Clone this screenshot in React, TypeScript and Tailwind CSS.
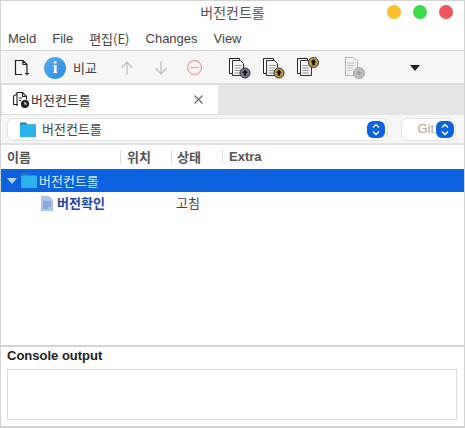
import React from "react";

const KR = { fontFamily: '"Noto Sans CJK KR", "Noto Sans", sans-serif' };
const LAT = { fontFamily: '"Liberation Sans", sans-serif' };

function DocStack({ color, top }: { color: string; top?: boolean }) {
  const cy = top ? 6.5 : 17;
  const cx = top ? 17.5 : 17;
  return (
    <svg width="23" height="23" viewBox="0 0 23 23">
      <path d="M1.500 2.500h10v15h-10z" fill="#fff" stroke="#222" />
      <path d="M4.500 4.500h8l3 3v12h-11z" fill="#f2f2f2" stroke="#333" />
      <path d="M6.500 9.500h7M6.500 12h7M6.500 14.500h6M6.500 17h6" stroke="#999" />
      <circle cx={cx} cy={cy} r="5" fill={color} stroke="#333" />
      <path d={`M${cx} ${cy - 3.5}l2.800 3.200h-1.500v3h-2.600v-3h-1.500z`} fill="#111" />
    </svg>
  );
}

function Updown() {
  return (
    <span className="flex h-[17px] w-[18px] items-center justify-center rounded-[6px] bg-[#0d62e0]">
      <svg width="10" height="13" viewBox="0 0 10 13" fill="none" stroke="#fff" strokeWidth="1.400">
        <path d="M2 4.500l3-3 3 3M2 8.500l3 3 3-3" />
      </svg>
    </span>
  );
}

function Folder({ w = 16, h = 15 }: { w?: number; h?: number }) {
  return (
    <svg width={w} height={h} viewBox="0 0 16 15">
      <path d="M0 1.500a1 1 0 011-1h5l1.500 2H16V14a1 1 0 01-1 1H1a1 1 0 01-1-1z" fill="#1f7fa8" />
      <path d="M1 2.500H15a1 1 0 011 1V14a1 1 0 01-1 1H1a1 1 0 01-1-1V3.500z" fill="#2bb2ec" />
    </svg>
  );
}

export default function App() {
  return (
    <div className="flex h-[428px] w-[465px] flex-col overflow-hidden border border-b-[2px] border-[#d4d4d4] bg-white text-[#333]" style={KR}>
      <div className="relative flex h-[26px] shrink-0 items-center justify-center pb-[3px]">
        <span className="text-[14px] text-[#555]">버전컨트롤</span>
        <div className="absolute right-[11px] top-[4px] flex gap-[12px]">
          <span className="h-[14px] w-[14px] rounded-full bg-[#fdbf2d]" />
          <span className="h-[14px] w-[14px] rounded-full bg-[#3bdc4a]" />
          <span className="h-[14px] w-[14px] rounded-full bg-[#f2545b]" />
        </div>
      </div>

      <div className="flex h-[24px] shrink-0 items-center gap-[16px] border-b border-[#d4d4d4] pl-[7px] pt-[1px] text-[13px] text-[#444]">
        <span style={LAT}>Meld</span>
        <span style={LAT}>File</span>
        <span>편집(E)</span>
        <span style={LAT}>Changes</span>
        <span style={LAT}>View</span>
      </div>

      <div className="flex h-[34px] shrink-0 items-center border-b-2 border-[#dcdcdc] bg-[#f6f6f6] pl-[12px] pt-[1px]">
        <svg className="shrink-0" width="18" height="18" viewBox="0 0 18 18" fill="none" stroke="#222" strokeWidth="1.200">
          <path d="M9 15.500H2.500V1.500h7.500l4 4v7M10 1.500v4h4M14 12.500v4M12 14.500h4" />
        </svg>
        <span className="ml-[13px] flex h-[22px] w-[22px] shrink-0 items-center justify-center rounded-full bg-gradient-to-br from-[#56b0ee] to-[#2a86e2] text-[17px] font-bold leading-none text-white" style={{ fontFamily: '"Liberation Serif", serif' }}>i</span>
        <span className="ml-[7px] w-[24px] shrink-0 text-[13px] text-[#444]">비교</span>
        <svg className="ml-[22px] shrink-0" width="16" height="16" viewBox="0 0 16 16" fill="none" stroke="#bbb" strokeWidth="1.200"><path d="M8 14.500V2M2.800 7.500L8 2l5.200 5.500" /></svg>
        <svg className="ml-[18px] shrink-0" width="16" height="16" viewBox="0 0 16 16" fill="none" stroke="#bbb" strokeWidth="1.200"><path d="M8 1.500V14M2.800 8.500L8 14l5.200-5.500" /></svg>
        <svg className="ml-[17px] shrink-0" width="17" height="17" viewBox="0 0 17 17" fill="none" stroke="#e9a9a6" strokeWidth="1.300"><circle cx="8.500" cy="8.500" r="7" /><path d="M4.500 8.500h8" /></svg>
        <span className="ml-[25px] flex shrink-0 gap-[11px]">
          <DocStack color="#7f7494" />
          <DocStack color="#c69a3e" />
          <DocStack color="#c69a3e" top />
        </span>
        <span className="ml-[24px] shrink-0 opacity-45"><svg width="23" height="23" viewBox="0 0 23 23">
          <path d="M2.500 1.500h8l4 4v14h-12z" fill="#eee" stroke="#666" />
          <path d="M4.500 7h7M4.500 9.500h7M4.500 12h6M4.500 14.500h4" stroke="#888" />
          <circle cx="16" cy="17" r="5.500" fill="#7f7494" stroke="#444" />
          <path d="M13.500 17h5M16 14.500v5" stroke="#222" />
        </svg></span>
        <svg className="ml-[44px] shrink-0" width="10" height="6" viewBox="0 0 10 6"><path d="M0 0h10L5 6z" fill="#222" /></svg>
      </div>

      <div className="flex h-[30px] shrink-0 bg-[#e4e4e4] pl-[1px]">
        <div className="flex w-[216px] items-center border-b border-[#dcdcdc] bg-white pl-[11px] pr-[15px]">
          <svg className="shrink-0" width="16" height="17" viewBox="0 0 16 17" fill="none" stroke="#222" strokeWidth="1.100">
            <path d="M5 13.500H.5V5l3.500-2" />
            <path d="M4 15V1.500h5.500l4 4v3" />
            <path d="M9.500 1.500v4h4M6 7h3M6 9.500h2" />
            <circle cx="12" cy="13" r="3.500" fill="#222" />
            <path d="M12 11v2h2" stroke="#fff" />
          </svg>
          <span className="ml-[2px] flex-1 text-[13px] text-[#333]">버전컨트롤</span>
          <svg width="9" height="9" viewBox="0 0 9 9" stroke="#666" strokeWidth="1.100"><path d="M.5.500l8 8M8.500.500l-8 8" /></svg>
        </div>
      </div>

      <div className="flex h-[30px] shrink-0 items-center gap-[13px] border-b-2 border-[#e2e2e2] bg-[#f6f6f6] pl-[6px] pr-[8px]">
        <div className="flex h-[23px] flex-1 items-center rounded-[7px] border border-[#e2e2e2] bg-white pl-[12px] pr-[2px]">
          <Folder />
          <span className="ml-[6px] flex-1 text-[13px] text-[#444]">버전컨트롤</span>
          <Updown />
        </div>
        <div className="flex h-[23px] w-[55px] items-center justify-end gap-[2px] rounded-[7px] border border-[#e2e2e2] bg-white pr-[1px]">
          <span className="text-[13px] text-[#aaa]" style={LAT}>Git</span>
          <Updown />
        </div>
      </div>

      <div className="flex h-[24px] shrink-0 items-center pb-[1px] text-[13px] font-bold text-[#555]">
        <span className="h-[14px] w-[120px] border-r border-[#ddd] pl-[6px] leading-[14px]">이름</span>
        <span className="h-[14px] w-[51px] border-r border-[#ddd] pl-[6px] leading-[14px]">위치</span>
        <span className="h-[14px] w-[51px] border-r border-[#ddd] pl-[5px] leading-[14px]">상태</span>
        <span className="pl-[6px] leading-[14px]" style={LAT}>Extra</span>
      </div>

      <div className="flex h-[23px] shrink-0 items-center bg-[#0d62e0] pl-[6px] text-[13px] text-[#dbe8fb]">
        <svg width="10" height="6" viewBox="0 0 10 6"><path d="M0 0h10L5 6z" fill="#b9d2f6" /></svg>
        <span className="ml-[4px]"><Folder w={16} h={15} /></span>
        <span className="ml-[2px]">버전컨트롤</span>
      </div>

      <div className="flex h-[22px] shrink-0 items-center pl-[40px] text-[13px]">
        <svg width="12" height="15" viewBox="0 0 12 15">
          <path d="M0 0h8l4 4v11H0z" fill="#a9c4ee" />
          <path d="M2 6h8M2 8h8M2 10h8M2 12h5" stroke="#6f8fc4" />
        </svg>
        <span className="ml-[4px] w-[119px] font-bold text-[#1a46a8]">버전확인</span>
        <span className="text-[#444]">고침</span>
      </div>

      <div className="flex-1 border-b-2 border-[#d4d4d4]" />

      <div className="flex h-[79px] shrink-0 flex-col pl-[6px] pr-[7px]">
        <span className="h-[22px] text-[13px] font-bold leading-[17px] text-[#222]" style={LAT}>Console output</span>
        <div className="h-[51px] border border-[#dedede] bg-white" />
      </div>
    </div>
  );
}
